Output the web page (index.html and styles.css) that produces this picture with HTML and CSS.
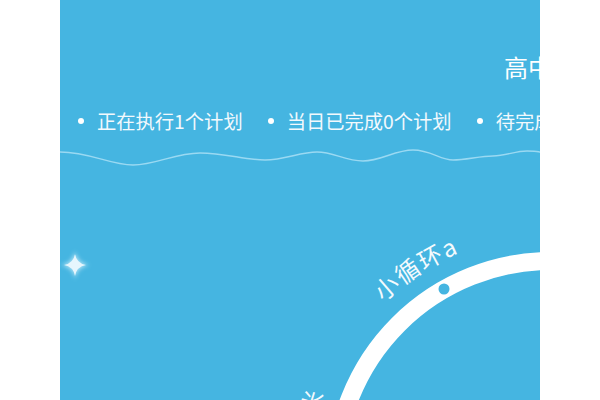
FILE: index.html
```html
<!DOCTYPE html>
<html lang="zh">
<head>
<meta charset="utf-8">
<link rel="stylesheet" href="styles.css">
</head>
<body>
<div class="panel">
  <div class="title">高中阶段</div>
  <ul class="stats">
    <li class="stat">正在执行1个计划</li>
    <li class="stat">当日已完成0个计划</li>
    <li class="stat">待完成0个计划</li>
  </ul>
  <svg class="wave" viewBox="0 0 480 30" width="480" height="30">
    <path d="M0,12 C30,12 50,25 73,25 S115,13 140,13 S185,20 205,20 S240,12 257,12 S285,21 303,21 S335,10 353,10 S380,20 393,20 S420,16 433,16 S455,11 467,11 S478,12 480,12" fill="none" stroke="#9ad9f2" stroke-width="1.4"/>
  </svg>
  <svg class="canvas" viewBox="0 0 480 400" width="480" height="400">
    <defs>
      <filter id="glow" x="-50%" y="-50%" width="200%" height="200%">
        <feGaussianBlur stdDeviation="2"/>
      </filter>
      <path id="ring-text" d="M249,477 A242,242 0 0 1 733,477"/>
    </defs>
    <path class="spark-glow" d="M15,251 Q17,263 29,265 Q17,267 15,279 Q13,267 1,265 Q13,263 15,251Z" filter="url(#glow)"/>
    <path class="spark" d="M15,254 Q16.6,263.4 26,265 Q16.6,266.6 15,276 Q13.4,266.6 4,265 Q13.4,263.4 15,254Z"/>
    <circle class="ring" cx="491" cy="477" r="216"/>
    <circle class="ring-dot" cx="384" cy="289" r="5.5"/>
    <text class="ring-label"><textPath href="#ring-text" startOffset="62">米</textPath></text>
    <text class="ring-label wide"><textPath href="#ring-text" startOffset="195">小循环a</textPath></text>
  </svg>
</div>
</body>
</html>
```
FILE: styles.css
```css
html, body {
  margin: 0;
  padding: 0;
  background: #ffffff;
}
body {
  font-family: "Noto Sans CJK SC", "Noto Sans", sans-serif;
}
.panel {
  position: relative;
  width: 480px;
  height: 400px;
  margin: 0 auto;
  background: #45b5e1;
  overflow: hidden;
  color: #ffffff;
}
.title {
  margin: 0 0 0 444px;
  padding-top: 55px;
  font-size: 24px;
  line-height: 24px;
  white-space: nowrap;
}
.stats {
  list-style: none;
  margin: 29px 0 0 0;
  padding: 0 0 0 18px;
  display: flex;
  gap: 25px;
  white-space: nowrap;
}
.stat {
  display: flex;
  align-items: center;
  font-size: 19.3px;
  line-height: 26px;
  color: #f2f9fd;
}
.stat::before {
  content: "";
  width: 6px;
  height: 6px;
  border-radius: 50%;
  background: #ffffff;
  margin-right: 13px;
  flex: none;
}
.wave {
  display: block;
  margin-top: 6px;
}
.canvas {
  position: absolute;
  left: 0;
  top: 0;
}
.spark-glow {
  fill: #bfe8f8;
  opacity: 0.85;
}
.spark {
  fill: #e6f6fd;
}
.ring {
  fill: none;
  stroke: #ffffff;
  stroke-width: 18;
}
.ring-dot {
  fill: #45b5e1;
}
.ring-label {
  font-family: "Noto Sans CJK SC", "Noto Sans", sans-serif;
  font-size: 23px;
  fill: #f4fafd;
}
.ring-label.wide {
  font-size: 24px;
  letter-spacing: 1.5px;
}
```
